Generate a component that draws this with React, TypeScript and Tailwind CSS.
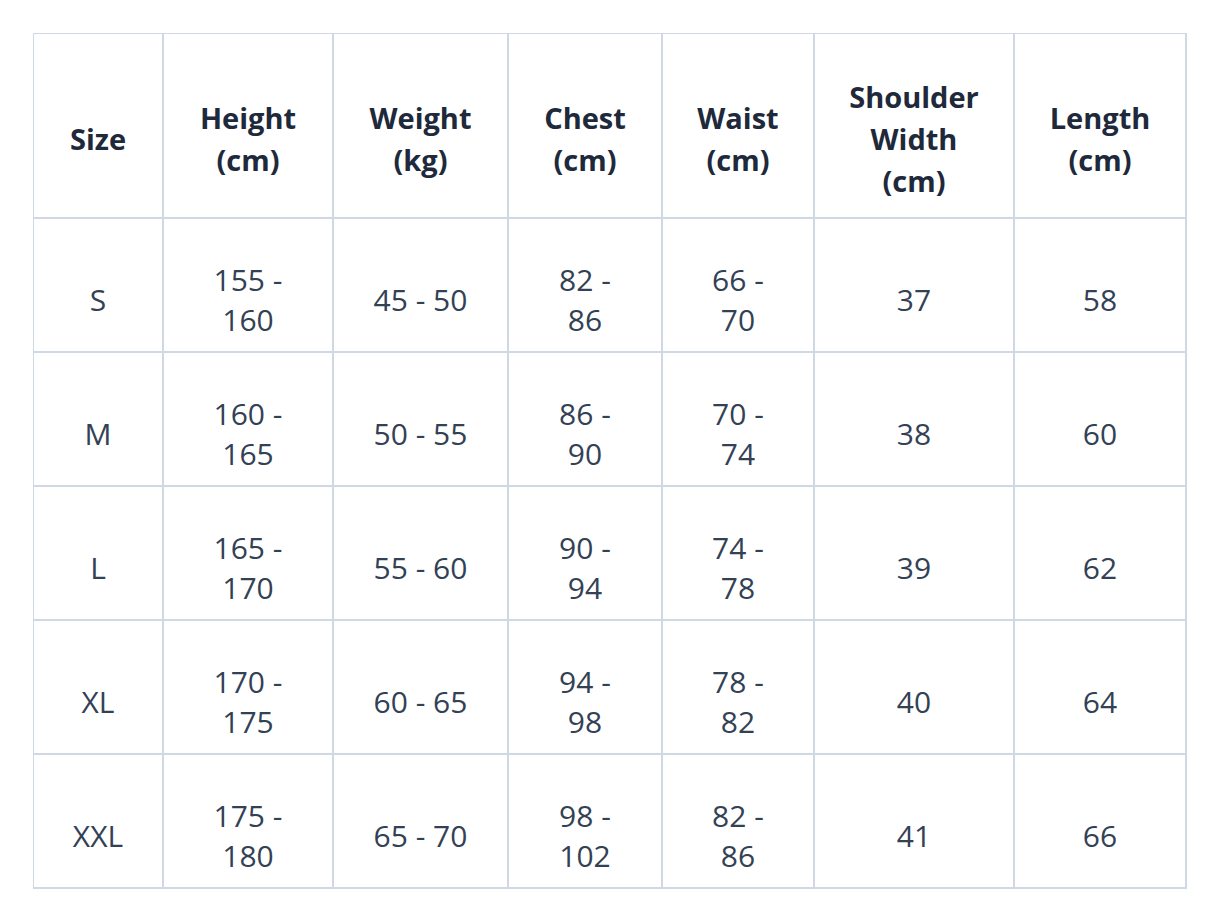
const rows = [
  ["S", "155 - 160", "45 - 50", "82 - 86", "66 - 70", "37", "58"],
  ["M", "160 - 165", "50 - 55", "86 - 90", "70 - 74", "38", "60"],
  ["L", "165 - 170", "55 - 60", "90 - 94", "74 - 78", "39", "62"],
  ["XL", "170 - 175", "60 - 65", "94 - 98", "78 - 82", "40", "64"],
  ["XXL", "175 - 180", "65 - 70", "98 - 102", "82 - 86", "41", "66"],
];

const headers = [
  "Size",
  "Height (cm)",
  "Weight (kg)",
  "Chest (cm)",
  "Waist (cm)",
  "Shoulder Width (cm)",
  "Length (cm)",
];

const widths = [130, 170, 175, 154, 152, 200, 172];

export default function App() {
  return (
    <div className="min-h-screen bg-white p-[33px] font-['Open_Sans',sans-serif]">
      <table className="table-fixed w-[1153px] border-separate border-spacing-0 border-t border-l border-[#cfd8e3]">
        <colgroup>
          {widths.map((w, i) => (
            <col key={i} style={{ width: w }} />
          ))}
        </colgroup>
        <thead>
          <tr>
            {headers.map((h) => (
              <th
                key={h}
                className="border-r-2 border-b-2 border-[#cfd8e3] px-[34px] pt-[42px] pb-[15px] text-center align-middle text-[29px] leading-[42px] font-bold text-[#1e293b]"
              >
                {h}
              </th>
            ))}
          </tr>
        </thead>
        <tbody>
          {rows.map((r) => (
            <tr key={r[0]}>
              {r.map((c, i) => (
                <td
                  key={i}
                  className="border-r-2 border-b-2 border-[#cfd8e3] px-[34px] pt-[41px] pb-[11px] text-center align-middle text-[30px] leading-[40px] text-[#334155]"
                >
                  {c}
                </td>
              ))}
            </tr>
          ))}
        </tbody>
      </table>
    </div>
  );
}
